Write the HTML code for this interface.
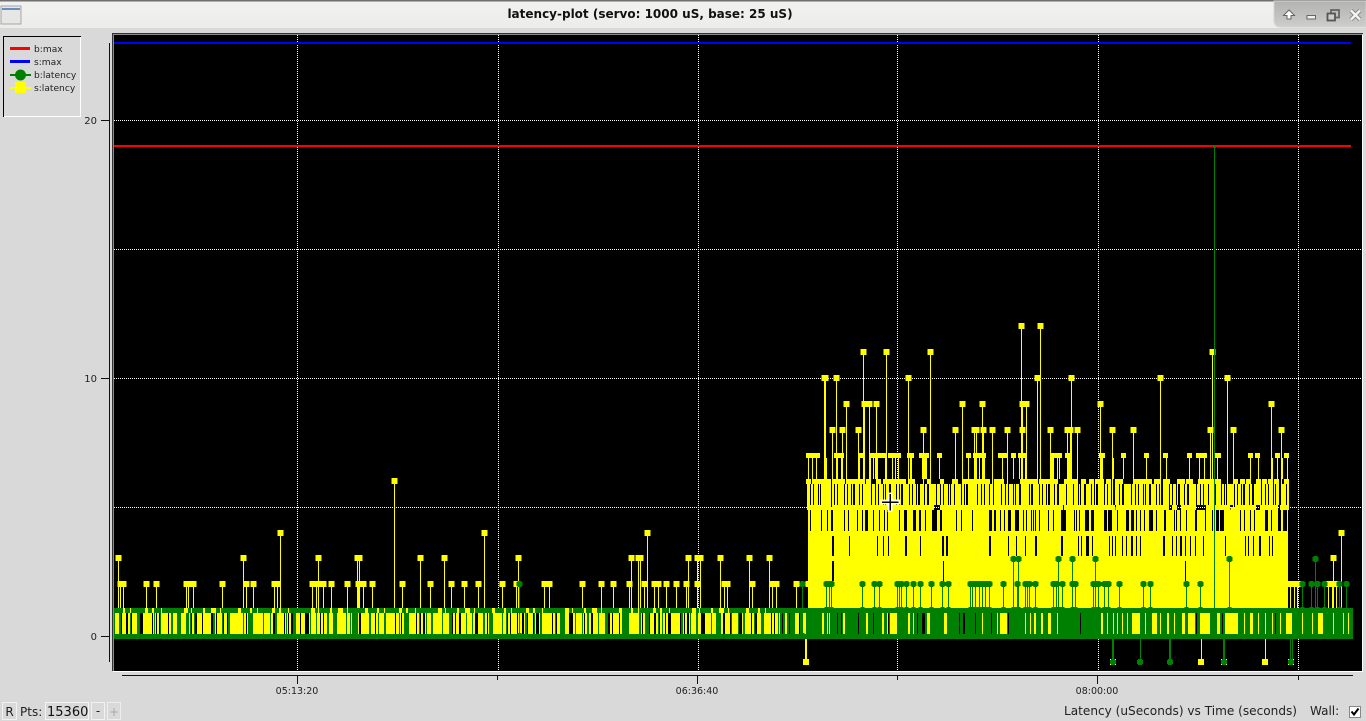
<!DOCTYPE html>
<html><head><meta charset="utf-8"><title>latency-plot</title>
<style>
html,body{margin:0;padding:0;background:#d9d9d9;width:1366px;height:721px;overflow:hidden}
svg{display:block}
text{font-family:"DejaVu Sans",sans-serif;fill:#222}
</style></head><body>
<svg width="1366" height="721" viewBox="0 0 1366 721" xmlns="http://www.w3.org/2000/svg" shape-rendering="crispEdges">
<defs>
<linearGradient id="tb" x1="0" y1="0" x2="0" y2="1"><stop offset="0" stop-color="#f2f2f0"/><stop offset="1" stop-color="#ecedeb"/></linearGradient>
<linearGradient id="tr" x1="0" y1="0" x2="0" y2="1"><stop offset="0" stop-color="#b2b2b0"/><stop offset="1" stop-color="#cdcdcb"/></linearGradient>
<marker id="s" markerUnits="userSpaceOnUse" markerWidth="8" markerHeight="8" refX="4" refY="4"><rect x="1" y="1" width="6" height="6" fill="#ff0"/></marker>
<marker id="c" markerUnits="userSpaceOnUse" markerWidth="8" markerHeight="8" refX="4" refY="4"><path d="M2 1h4v1h1v4h-1v1h-4v-1h-1v-4h1z" fill="#008000"/></marker>
</defs>
<rect width="1366" height="721" fill="#d9d9d9"/>
<!-- title bar -->
<rect width="1366" height="28" fill="url(#tb)"/>
<rect width="1366" height="1" fill="#707070"/><rect y="1" width="1366" height="1" fill="#b0b0b0"/>
<rect x="1" y="6" width="20" height="18" fill="#e6e6e4" stroke="#a6a6a6"/><rect x="2" y="8" width="18" height="2" fill="#6a8cc0"/>
<text x="650" y="18" text-anchor="middle" font-size="12" font-weight="700" style="font-weight:700;fill:#111">latency-plot (servo: 1000 uS, base: 25 uS)</text>
<path d="M1274 1H1366V27H1281Q1274 27 1274 20Z" fill="url(#tr)" stroke="#d4d4d2" shape-rendering="auto"/>
<g shape-rendering="auto">
<path d="M1289 10l-5.500 5.500h3.500v3.500h4v-3.500h3.500z" fill="#fff" stroke="#666" stroke-width="1"/>
<rect x="1307" y="15.500" width="8.500" height="3.500" fill="#f0f0f0" stroke="#666"/>
<rect x="1331" y="10" width="8" height="7.500" fill="none" stroke="#666" stroke-width="1.800"/><rect x="1327.500" y="13.500" width="7.500" height="7" fill="#ccc" stroke="#555" stroke-width="1.800"/>
<path d="M1351 10.500l9 9M1360 10.500l-9 9" stroke="#808080" stroke-width="4.200"/><path d="M1351 10.500l9 9M1360 10.500l-9 9" stroke="#f4f4f4" stroke-width="2.500"/>
</g>
<!-- legend -->
<path d="M3.500 117V36.500H81" fill="none" stroke="#000"/><path d="M4 116.500H80.500V37" fill="none" stroke="#fff"/>
<rect x="10" y="47" width="20" height="3" fill="#f00"/><rect x="10" y="60" width="20" height="3" fill="#00f"/>
<rect x="10" y="74" width="21" height="2" fill="#008000"/><circle cx="20.500" cy="75" r="5.500" fill="#008000" shape-rendering="auto"/>
<rect x="10" y="87" width="21" height="2" fill="#ff0"/><rect x="15" y="82" width="11" height="11" fill="#ff0"/>
<g font-size="9.100" style="fill:#333"><text x="34" y="52">b:max</text><text x="34" y="65">s:max</text><text x="34" y="78">b:latency</text><text x="34" y="91">s:latency</text></g>
<!-- y axis -->
<path d="M109.500 43V662M101 120.500H109M101 378.500H109M101 636.500H109" stroke="#111" fill="none"/>
<g font-size="10" text-anchor="end"><text x="97" y="124">20</text><text x="97" y="382">10</text><text x="97" y="640">0</text></g>
<!-- x axis -->
<path d="M122 675.500H1353M297.500 675V684M497.500 675V680M697.500 675V684M897.500 675V680M1097.500 675V684M1298.500 675V680" stroke="#111" fill="none"/>
<g font-size="9.500" text-anchor="middle"><text x="297" y="694">05:13:20</text><text x="697" y="694">06:36:40</text><text x="1097" y="694">08:00:00</text></g>
<!-- plot frame -->
<path d="M112.500 34V671M112 33.500H1363" stroke="#333" fill="none"/>
<path d="M113.500 35V671M113 34.500H1362" stroke="#8a8a8a" fill="none"/>
<rect x="114" y="35" width="1248" height="636" fill="#000"/>
<path d="M113 671.500H1363M1362.500 35V672" stroke="#fff" fill="none"/>
<!-- grid -->
<g stroke="#fff" stroke-dasharray="1 1" fill="none">
<path d="M114 120.500H1362M114 249.500H1362M114 378.500H1362M114 507.500H1362"/>
<path d="M297.500 35V671M498.500 35V671M698.500 35V671M897.500 35V671M1098.500 35V671M1298.500 35V671"/>
</g>
<rect x="114" y="42" width="1237" height="2" fill="#00f"/>
<rect x="114" y="145" width="1237" height="2" fill="#f00"/>
<!-- yellow spikes -->
<g fill="none" stroke="#ff0" stroke-width="1" marker-start="url(#s)" marker-mid="url(#s)">
<path marker-start="url(#s)" marker-mid="url(#s)" d="M118.500 558V636M243.500 558V636M318.500 558V636M357.500 558V636M359.500 558V636M420.500 558V636M444.500 558V636M518.500 558V636M631.500 558V636M638.500 558V636M640.500 558V636M688.500 558V636M697.500 558V636M700.500 558V636M720.500 558V636M749.500 558V636M769.500 558V636M1333.500 558V636"/>
<path d="M120.500 584V636M123.500 584V636M146.500 584V636M156.500 584V636M186.500 584V636M188.500 584V636M193.500 584V636M222.500 584V636M246.500 584V636M253.500 584V636M274.500 584V636M277.500 584V636M312.500 584V636M316.500 584V636M318.500 584V636M323.500 584V636M331.500 584V636M347.500 584V636M358.500 584V636M363.500 584V636M372.500 584V636M402.500 584V636M430.500 584V636M451.500 584V636M464.500 584V636M478.500 584V636M502.500 584V636M516.500 584V636M544.500 584V636M549.500 584V636M582.500 584V636M601.500 584V636M613.500 584V636M629.500 584V636M644.500 584V636M654.500 584V636M658.500 584V636M666.500 584V636M676.500 584V636M686.500 584V636M697.500 584V636M724.500 584V636M727.500 584V636M752.500 584V636M772.500 584V636M776.500 584V636M796.500 584V636M808.500 584V636M1290.500 584V636M1294.500 584V636M1297.500 584V636M1328.500 584V636M1332.500 584V636M1336.500 584V636"/>
<path d="M280.500 533V636M484.500 533V636M647.500 533V636M1341.500 533V636"/>
<path d="M394.500 481V636"/>
<path d="M863.500 352V510M886.500 352V510M930.500 352V510M1212.500 352V510"/>
<path d="M824.500 378V510M825.500 378V510M836.500 378V510M908.500 378V510M1037.500 378V510M1071.500 378V510M1160.500 378V510M1227.500 378V510"/>
<path d="M846.500 404V510M869.500 404V510M876.500 404V510M864.500 404V510M962.500 404V510M982.500 404V510M1022.500 404V510M1026.500 404V510M1100.500 404V510M1271.500 404V510"/>
<path d="M1021.500 326V510M1040.500 326V510"/>
<path d="M832.500 430V510M842.500 430V510M858.500 430V510M923.500 430V510M955.500 430V510M974.500 430V510M976.500 430V510M983.500 430V510M992.500 430V510M1007.500 430V510M1022.500 430V510M1050.500 430V510M1067.500 430V510M1070.500 430V510M1077.500 430V510M1112.500 430V510M1133.500 430V510M1210.500 430V510M1233.500 430V510M1281.500 430V510"/>
</g>
<!-- level -1 markers -->
<path d="M806 639V660" stroke="#ff0" stroke-width="2" fill="none"/>
<path d="M1201.500 639V660M1265.500 639V660" stroke="#ff0" fill="none"/>
<path d="M803 659h6v6h-6zM1198 659h6v6h-6zM1262 659h6v6h-6zM1110 659h6v6h-6zM1221 659h6v6h-6zM1288 659h6v6h-6z" fill="#ff0"/>
<!-- level 7 row -->
<path transform="translate(0,455.500)" stroke="#ff0" stroke-width="5" fill="none" d="M806 0h14M834 0h10M858 0h5M869 0h17M888 0h13M907 0h7M919 0h10M937 0h5M966 0h5M973 0h13M998 0h10M1011 0h5M1018 0h9M1051 0h11M1065 0h7M1099 0h6M1121 0h5M1144 0h5M1163 0h5M1187 0h5M1196 0h11M1215 0h6M1248 0h5M1255 0h5M1275 0h5M1284 0h5"/>
<!-- band 458-479 -->
<path transform="translate(0,468.500)" stroke="#ff0" stroke-width="21" fill="none" d="M808 0h1M812 0h1M816 0h1M824 0h3M832 0h1M837 0h1M841 0h2M846 0h1M859 0h1M863 0h2M870 0h1M873 0h1M875 0h1M877 0h1M885 0h2M892 0h1M895 0h1M898 0h1M910 0h2M922 0h5M930 0h1M939 0h1M955 0h1M962 0h1M968 0h1M975 0h1M979 0h1M983 0h2M992 0h1M1002 0h1M1007 0h1M1013 0h1M1019 0h1M1022 0h1M1025 0h1M1037 0h1M1040 0h1M1050 0h3M1053 0h1M1057 0h1M1059 0h1M1067 0h5M1077 0h1M1100 0h3M1113 0h1M1123 0h1M1133 0h1M1146 0h1M1166 0h1M1189 0h1M1199 0h1M1204 0h1M1212 0h1M1217 0h1M1227 0h1M1233 0h1M1250 0h1M1258 0h1M1272 0h1M1277 0h1M1282 0h1M1287 0h1"/>
<!-- level 6 row -->
<path transform="translate(0,481.500)" stroke="#ff0" stroke-width="5" fill="none" d="M806 0h5M812 0h19M833 0h12M846 0h17M866 0h5M876 0h5M883 0h23M909 0h6M927 0h3M940 0h4M952 0h6M962 0h28M994 0h10M1020 0h17M1039 0h19M1064 0h13M1081 0h5M1089 0h5M1095 0h9M1106 0h5M1115 0h8M1133 0h19M1154 0h6M1163 0h7M1177 0h8M1186 0h7M1198 0h23M1233 0h5M1240 0h5M1246 0h5M1256 0h5M1262 0h5M1268 0h5M1274 0h5M1284 0h5"/>
<!-- band 484-505 -->
<path d="M807 494.500H1289" stroke="#ff0" stroke-width="21" fill="none" stroke-dasharray="3 1 2 1 4 1 1 1 3 2 5 1 2 1 1 2 6 1 2 1 3 1 1 2 4 1 2 2 7 1"/>
<!-- level 5 row -->
<path transform="translate(0,507.500)" stroke="#ff0" stroke-width="5" fill="none" d="M807 0h24M832 0h102M940 0h123M1064 0h51M1116 0h53M1172 0h5M1181 0h15M1206 0h24M1235 0h21M1260 0h18M1280 0h9"/>
<!-- yellow block -->
<rect x="808" y="510" width="480" height="98" fill="#ff0"/>
<path transform="translate(0,520.500)" stroke="#000" stroke-width="21" fill="none" d="M810 0h1M821 0h1M827 0h1M831 0h2M844 0h1M848 0h1M857 0h1M862 0h1M865 0h3M873 0h1M879 0h1M884 0h1M887 0h1M899 0h1M904 0h3M913 0h3M919 0h2M925 0h1M932 0h5M940 0h2M956 0h1M961 0h1M972 0h1M989 0h3M994 0h2M1000 0h1M1004 0h1M1008 0h3M1015 0h4M1023 0h1M1026 0h1M1031 0h1M1033 0h1M1035 0h1M1039 0h1M1048 0h1M1053 0h1M1061 0h5M1074 0h1M1076 0h1M1079 0h1M1085 0h4M1091 0h3M1104 0h3M1108 0h4M1117 0h1M1126 0h3M1131 0h3M1136 0h1M1140 0h1M1144 0h1M1149 0h4M1156 0h1M1164 0h2M1174 0h1M1176 0h1M1180 0h1M1186 0h1M1195 0h2M1205 0h1M1212 0h1M1216 0h3M1220 0h4M1240 0h1M1244 0h1M1250 0h1M1254 0h1M1265 0h3M1271 0h1M1278 0h3M1283 0h4"/>
<path transform="translate(0,546)" stroke="#000" stroke-width="20" fill="none" d="M832 0h2M849 0h1M877 0h1M883 0h1M888 0h1M905 0h2M920 0h1M942 0h2M946 0h2M989 0h2M1008 0h1M1016 0h1M1025 0h1M1035 0h2M1061 0h2M1078 0h1M1081 0h1M1086 0h3M1092 0h1M1109 0h1M1112 0h1M1115 0h1M1122 0h1M1126 0h1M1131 0h2M1136 0h1M1140 0h1M1163 0h2M1172 0h1M1176 0h1M1180 0h2M1185 0h1M1190 0h1M1195 0h1M1203 0h1M1225 0h1M1245 0h1M1248 0h1M1253 0h1M1259 0h2M1269 0h1M1272 0h1"/>
<path transform="translate(0,571)" stroke="#000" stroke-width="20" fill="none" d="M832 0h2M943 0h1M1185 0h1"/>
<!-- level 1 strip left + band left -->
<rect x="114" y="608" width="694" height="5" fill="#ff0"/>
<rect x="114" y="613" width="666" height="21" fill="#ff0"/>
<path d="M114 623.500H780" stroke="#000" stroke-width="21" fill="none" stroke-dasharray="1 6 1 4 2 3 1 5 1 2 3 9 1 3 1 2 2 7 1 4 4 11 1 2 1 3 2 5 1 8 3 2 1 6 1 3 2 14 1 2"/>
<path transform="translate(0,623.500)" stroke="#ff0" stroke-width="21" fill="none" d="M172 0h7M237 0h6M247 0h15M267 0h6M343 0h9M390 0h5M432 0h18M478 0h4M539 0h13M695 0h5"/>
<path d="M114 623.500H780" stroke="#008000" stroke-width="21" fill="none" stroke-dasharray="1 4 2 9 1 6 3 14 1 5 1 10 2 4 4 9 1 3 1 18 2 7 1 5 2 13 1 4 5 10 1 6"/>
<path transform="translate(0,623.500)" stroke="#008000" stroke-width="21" fill="none" d="M186 0h3M352 0h6M623 0h5"/>
<path d="M114 610.500H808" stroke="#008000" stroke-width="5" fill="none" stroke-dasharray="9 2 5 1 14 3 4 2 7 1 22 4 3 1 11 2 6 5 4 1 17 3"/>
<!-- right band -->
<rect x="780" y="608" width="573" height="26" fill="#008000"/>
<path transform="translate(0,623.500)" stroke="#ff0" stroke-width="21" fill="none" d="M785 0h2M795 0h4M803 0h2M805 0h1M822 0h2M827 0h1M829 0h1M843 0h2M866 0h2M882 0h2M887 0h1M890 0h7M908 0h2M913 0h1M917 0h1M927 0h3M944 0h3M964 0h1M982 0h1M997 0h1M1000 0h7M1025 0h1M1030 0h1M1034 0h2M1041 0h2M1048 0h3M1057 0h1M1101 0h2M1107 0h1M1113 0h1M1117 0h1M1122 0h1M1127 0h1M1132 0h8M1145 0h1M1152 0h5M1160 0h1M1167 0h2M1174 0h1M1182 0h3M1188 0h7M1200 0h10M1217 0h3M1225 0h13M1244 0h1M1250 0h3M1258 0h1M1265 0h1M1272 0h1M1280 0h1M1286 0h6M1302 0h1M1312 0h1M1318 0h5M1333 0h1M1343 0h1M1348 0h1"/>
<path transform="translate(0,623.500)" stroke="#000" stroke-width="21" fill="none" d="M782 0h1M789 0h1M799 0h1M837 0h1M841 0h1M858 0h1M873 0h1M888 0h1M917 0h1M922 0h3M959 0h1M963 0h2M975 0h1M991 0h1M1008 0h1M1080 0h1M1196 0h1M1222 0h1M1275 0h1"/>
<!-- green spikes -->
<g fill="none" stroke="#008000" stroke-width="1" marker-start="url(#c)" marker-mid="url(#c)">
<path d="M519.500 584V636M802.500 584V636M826.500 584V610M829.500 584V610M831.500 584V610M862.500 584V610M874.500 584V610M879.500 584V610M897.500 584V610M899.500 584V610M901.500 584V610M906.500 584V610M913.500 584V610M920.500 584V610M931.500 584V610M942.500 584V610M948.500 584V610M970.500 584V610M972.500 584V610M975.500 584V610M979.500 584V610M982.500 584V610M985.500 584V610M989.500 584V610M1003.500 584V610M1017.500 584V610M1025.500 584V610M1027.500 584V610M1029.500 584V610M1035.500 584V610M1053.500 584V610M1056.500 584V610M1062.500 584V610M1072.500 584V610M1075.500 584V610M1093.500 584V610M1095.500 584V610M1098.500 584V610M1104.500 584V610M1108.500 584V610M1119.500 584V610M1143.500 584V610M1150.500 584V610M1186.500 584V610M1200.500 584V610M1302.500 584V610M1311.500 584V610M1317.500 584V610M1324.500 584V610M1339.500 584V610M1346.500 584V610"/>
<path d="M1013.500 559V610M1018.500 559V610M1058.500 559V610M1072.500 559V610M1095.500 559V610M1229.500 559V610M1315.500 559V610"/>
</g>
<!-- green level -1 -->
<path d="M1113 639V660M1170 639V660M1224 639V660" stroke="#008000" stroke-width="2" fill="none"/>
<path d="M1140.500 639V660M1290.500 639V660M1292.500 639V660" stroke="#008000" fill="none"/>
<path d="M1111 659h4v1h1v4h-1v1h-4v-1h-1v-4h1zM1138 659h4v1h1v4h-1v1h-4v-1h-1v-4h1zM1168 659h4v1h1v4h-1v1h-4v-1h-1v-4h1zM1222 659h4v1h1v4h-1v1h-4v-1h-1v-4h1zM1289 659h4v1h1v4h-1v1h-4v-1h-1v-4h1z" fill="#008000"/>
<!-- tall green spike -->
<path d="M1214.500 146V610" stroke="#008000" fill="none"/>
<rect x="1213" y="145" width="3" height="3" fill="#008000"/>
<!-- baseline -->
<rect x="114" y="634" width="1239" height="5" fill="#008000"/>
<!-- cursor -->
<path d="M880.500 502H900M890 492.500V512" stroke="#fff" stroke-width="5" fill="none"/>
<path d="M882 502H898.500M890 494V510.500" stroke="#000" stroke-width="1.500" fill="none"/>
<!-- bottom bar -->
<rect x="2.500" y="702.500" width="14" height="17" fill="#d9d9d9" stroke="#f2f2f2"/>
<text x="9.500" y="716" text-anchor="middle" font-size="12">R</text>
<text x="20" y="716" font-size="12">Pts:</text>
<rect x="45.500" y="702.500" width="43" height="17" fill="#d9d9d9" stroke="#f4f4f4"/>
<text x="47" y="716" font-size="13" style="fill:#111">15360</text>
<rect x="91.500" y="702.500" width="13" height="17" fill="#d9d9d9" stroke="#f2f2f2"/>
<text x="98" y="715" text-anchor="middle" font-size="12">-</text>
<rect x="107.500" y="702.500" width="13" height="17" fill="#d9d9d9" stroke="#eee"/>
<text x="114" y="716" text-anchor="middle" font-size="12" style="fill:#aaa">+</text>
<text x="1064" y="715" font-size="12.100">Latency (uSeconds) vs Time (seconds)</text>
<text x="1310" y="715" font-size="12">Wall:</text>
<rect x="1349.500" y="706.500" width="11" height="11" fill="#fff" stroke="#888"/>
<path d="M1351.500 711.500l2.500 3 4.500-6" fill="none" stroke="#000" stroke-width="2" shape-rendering="auto"/>
</svg>
</body></html>
